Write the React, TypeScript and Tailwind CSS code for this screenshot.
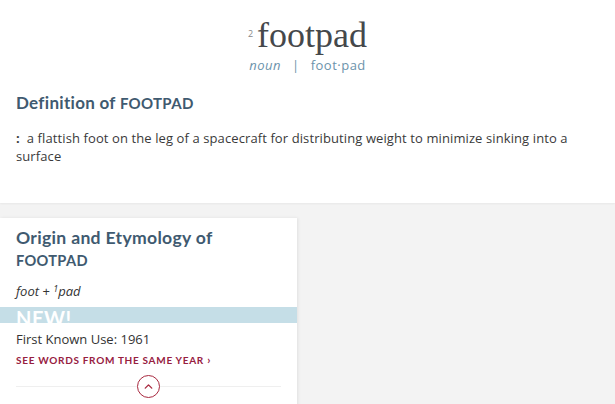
import { ChevronUp } from 'lucide-react';

const serif = "font-['Liberation_Serif','DejaVu_Serif',serif]";
const lato = "font-['Lato','Open_Sans',sans-serif]";
const open = "font-['Open_Sans','Noto_Sans',sans-serif]";

export default function App() {
  return (
    <div className="w-[615px] h-[404px] overflow-hidden bg-[#f3f3f3]">
      <section className="bg-white h-[203px] shadow-[0_1px_2px_rgba(0,0,0,0.05)]">
        <div className="flex flex-col items-center pt-[15px]">
          <h1 className={`${serif} text-[36px] leading-[40px] text-[#45484b] flex items-start`}>
            <span className={`${open} text-[9px] leading-none text-[#888] mt-[14px] mr-[4px]`}>2</span>
            footpad
          </h1>
          <div className={`${open} text-[13px] leading-[18px] text-[#6c93ab] tracking-[0.5px] mt-[1px] flex gap-[11px]`}>
            <em>noun</em>
            <span>|</span>
            <span>foot·pad</span>
          </div>
        </div>
        <h2 className={`${lato} font-bold text-[17px] leading-[22px] text-[#3f5a70] tracking-[0.3px] px-4 mt-[18px]`}>
          Definition of <span className="text-[15px]">FOOTPAD</span>
        </h2>
        <p className={`${open} text-[13px] leading-[18px] text-[#3a3a3a] tracking-[0.1px] px-4 mt-[15px] pr-[40px]`}>
          <span className="font-bold mr-[7px]">:</span>a flattish foot on the leg of a spacecraft for distributing weight to minimize sinking into a surface
        </p>
      </section>
      <div className="pt-[15px]">
        <article className="w-[297px] bg-white shadow-[1px_0_3px_rgba(0,0,0,0.08)] pt-[9px] pb-4">
          <h2 className={`${lato} font-bold text-[17.6px] leading-[22px] text-[#3f5a70] tracking-[0.3px] px-4`}>
            Origin and Etymology of
            <br />
            <span className="text-[14.6px]">FOOTPAD</span>
          </h2>
          <p className={`${open} italic text-[13px] leading-[18px] text-[#333] px-4 mt-[10px]`}>
            foot + <sup className="text-[9px]">1</sup>pad
          </p>
          <div className="bg-[#c5dee7] h-[16px] overflow-hidden mt-[7px] px-4">
            <span className={`${lato} font-bold text-[20px] leading-[22px] text-white block tracking-[0.5px]`}>NEW!</span>
          </div>
          <p className={`${open} text-[13px] leading-[18px] text-[#333] px-4 mt-[7px]`}>First Known Use: 1961</p>
          <a className={`${lato} font-bold text-[10px] leading-[14px] text-[#97203f] tracking-[0.7px] px-4 mt-[5px] block`}>
            SEE WORDS FROM THE SAME YEAR <span className="text-[11px]">›</span>
          </a>
          <div className="relative mx-4 mt-[8px] h-[22px] flex items-center justify-center">
            <div className="absolute left-0 right-0 top-1/2 border-t border-[#efefef]" />
            <button className="relative w-[23px] h-[23px] rounded-full border border-[#a8293f] bg-white flex items-center justify-center text-[#a8293f]">
              <ChevronUp size={13} strokeWidth={2.5} />
            </button>
          </div>
        </article>
      </div>
    </div>
  );
}
